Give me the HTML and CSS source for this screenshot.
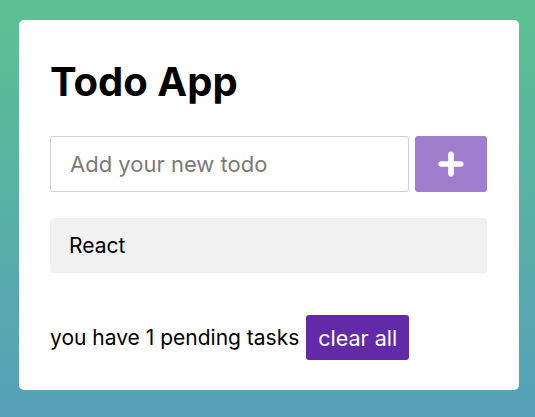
FILE: index.html
```html
<!DOCTYPE html>
<html lang="en">
<head>
<meta charset="utf-8">
<title>Todo App</title>
<link rel="stylesheet" href="styles.css">
</head>
<body>
  <main class="card">
    <h1 class="title">Todo App</h1>
    <form class="add-row">
      <input class="add-input" type="text" placeholder="Add your new todo">
      <button class="add-btn" type="button" aria-label="Add">
        <svg width="26" height="26" viewBox="0 0 26 26" aria-hidden="true">
          <path d="M13 3.2V22.8M3.2 13H22.8" stroke="#fff" stroke-width="5.6" stroke-linecap="round" fill="none"/>
        </svg>
      </button>
    </form>
    <ul class="todo-list">
      <li class="todo-item">React</li>
    </ul>
    <div class="footer">
      <span class="pending">you have 1 pending tasks</span>
      <button class="clear-btn" type="button">clear all</button>
    </div>
  </main>
</body>
</html>
```

FILE: styles.css
```css
* { box-sizing: border-box; }

html, body { height: 100%; }

body {
  margin: 0;
  padding: 20px 16px 0 19px;
  background: linear-gradient(to bottom, #5dc192 0%, #55a0b9 100%);
  font-family: "Inter", "Liberation Sans", sans-serif;
  color: #000;
}

.card {
  width: 500px;
  background: #fff;
  border-radius: 5px;
  padding: 30px 32px 30px 31px;
}

.title {
  margin: 0 0 23px 0;
  font-size: 40px;
  line-height: 63px;
  font-weight: 700;
}

.add-row {
  display: flex;
  gap: 6px;
  margin: 0 0 26px 0;
}

.add-input {
  flex: 1 1 auto;
  min-width: 0;
  width: 0;
  height: 56px;
  border: 1px solid #cfcfcf;
  border-radius: 3px;
  padding: 0 19px;
  font-family: inherit;
  font-size: 22px;
  color: #333;
  outline: none;
}

.add-input::placeholder { color: #7a7a7a; }

.add-btn {
  flex: 0 0 72px;
  width: 72px;
  height: 56px;
  border: none;
  border-radius: 3px;
  background: #a07ecf;
  display: flex;
  align-items: center;
  justify-content: center;
  padding: 0;
}

.todo-list {
  list-style: none;
  margin: 0 0 42px 0;
  padding: 0;
}

.todo-item {
  height: 55px;
  background: #f1f1f1;
  border-radius: 3px;
  padding: 0 19px;
  display: flex;
  align-items: center;
  font-size: 21px;
}

.footer {
  display: flex;
  align-items: center;
  gap: 7px;
  font-size: 21px;
}

.clear-btn {
  height: 45px;
  border: none;
  border-radius: 3px;
  background: #6229a9;
  color: #fff;
  font-family: inherit;
  font-size: 21.5px;
  padding: 0 12px;
}
```
